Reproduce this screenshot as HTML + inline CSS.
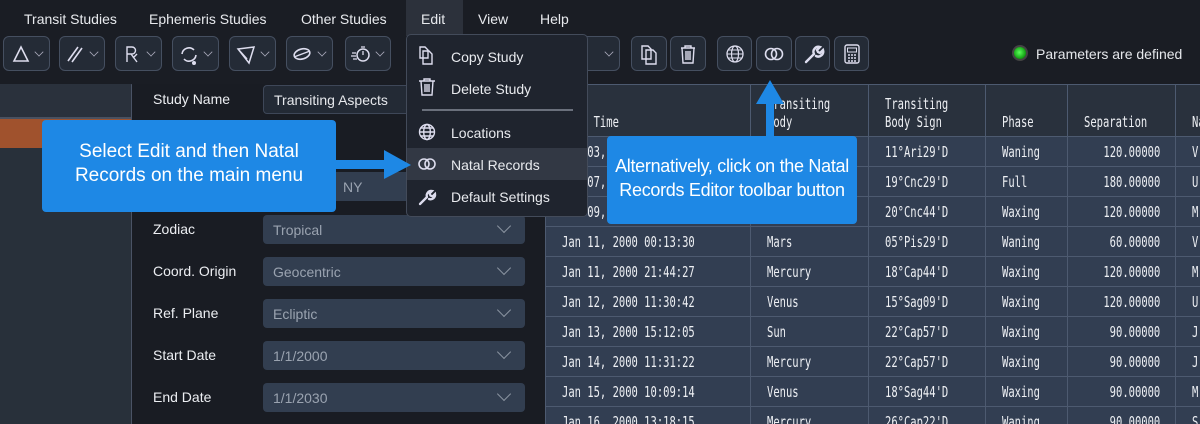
<!DOCTYPE html>
<html><head><meta charset="utf-8"><style>
*{margin:0;padding:0;box-sizing:border-box}
html,body{width:1200px;height:424px;overflow:hidden}
body{background:#1a1d24;font-family:"Liberation Sans","DejaVu Sans",sans-serif;color:#e6e8ec;position:relative}
.a{position:absolute}
.menu span{position:absolute;top:11px;font-size:14px;color:#e8eaee}
.tb{position:absolute;top:36px;height:35px;border:1px solid #454f60;border-radius:6px;background:#242b36}
.tb svg{position:absolute}
.car{position:absolute;right:6px;top:11px;width:8px;height:8px;border-right:1.2px solid #aab;border-bottom:1.2px solid #aab;transform:rotate(45deg) scale(.8)}
.lbl{position:absolute;left:153px;font-size:14px;color:#eceef2}
.inp{position:absolute;left:263px;width:262px;height:29px;background:#323e50;border-radius:4px;font-size:14px;color:#9aa3b0;padding:7px 10px}
.inp .chev{position:absolute;right:16px;top:6px;width:10px;height:10px;border-right:1.3px solid #8a93a0;border-bottom:1.3px solid #8a93a0;transform:rotate(45deg)}
.tw{position:absolute;left:545px;top:84px;width:655px;height:340px;overflow:hidden}
table{border-collapse:collapse;table-layout:fixed;width:700px;font-family:"DejaVu Sans Mono","Liberation Mono",monospace;color:#eef0f4}
td,th{border:1px solid #4d5a70;height:30px;padding:0 0 0 16px;white-space:nowrap;font-weight:normal;overflow:hidden;font-size:15px}
td span,th span{display:inline-block;transform:scaleX(.7);transform-origin:left center}
td.r span{transform-origin:right center}
th{background:#29313d;text-align:left;vertical-align:bottom;padding-bottom:5px;height:52px;line-height:18px}
td{background:#323e52}
td.r{text-align:right;padding:0 15px 0 0}
.mi{position:absolute;left:451px;font-size:14px;color:#e8eaee}
.call{position:absolute;background:#1e88e5;border-radius:4px;color:#fff;font-size:19px;text-align:center;line-height:24px;white-space:nowrap}
</style></head><body>
<div class="menu">
<div class="a" style="left:406px;top:0;width:57px;height:36px;background:#2c313b"></div>
<span style="left:24px">Transit Studies</span>
<span style="left:149px">Ephemeris Studies</span>
<span style="left:301px">Other Studies</span>
<span style="left:421px">Edit</span>
<span style="left:478px">View</span>
<span style="left:540px">Help</span>
</div>
<div class="tb" style="left:3px;width:47px"><svg width="30" height="33"><path d="M10 24 L17 10 L24 24 Z" fill="none" stroke="#dde" stroke-width="1.6"/></svg><div class="car"></div></div>
<div class="tb" style="left:59px;width:46px"><svg width="30" height="33"><path d="M8 24 L18 10 M12 25 L22 11" stroke="#dde" stroke-width="1.6"/></svg><div class="car"></div></div>
<div class="tb" style="left:115px;width:47px"><svg width="30" height="33"><path d="M11 25 V10 H16 a3.5 3.5 0 0 1 0 7 H11 M15 17 L21 25 M17 21 L21 17" fill="none" stroke="#dde" stroke-width="1.4"/></svg><div class="car"></div></div>
<div class="tb" style="left:172px;width:47px"><svg width="30" height="33"><path d="M9 17 a7 7 0 0 1 12 -4 M23 18 a7 7 0 0 1 -12 4" fill="none" stroke="#dde" stroke-width="1.6"/><circle cx="21" cy="26" r="2" fill="#dde"/></svg><div class="car"></div></div>
<div class="tb" style="left:229px;width:47px"><svg width="30" height="33"><path d="M8 12 L24 10 L19 26 Z M8 12 L17 22" fill="none" stroke="#dde" stroke-width="1.5"/></svg><div class="car"></div></div>
<div class="tb" style="left:286px;width:47px"><svg width="30" height="33"><ellipse cx="15" cy="17" rx="8" ry="5" fill="none" stroke="#dde" stroke-width="1.6" transform="rotate(-15 15 17)"/><path d="M7 20 L23 14" stroke="#dde" stroke-width="1.4"/></svg><div class="car"></div></div>
<div class="tb" style="left:345px;width:46px"><svg width="30" height="33"><circle cx="17" cy="18" r="6" fill="none" stroke="#dde" stroke-width="1.5"/><path d="M15 10 H19 M17 18 V14 M6 16 H10 M5 19 H10 M7 22 H11" stroke="#dde" stroke-width="1.3"/></svg><div class="car"></div></div>
<div class="tb" style="left:573px;width:47px"><div class="car"></div></div>
<div class="tb" style="left:631px;width:36px"><svg width="34" height="33"><path d="M10 9 H16 L19 12 V22 H10 Z M14 13 H21 L24 16 V27 H14 Z" fill="#242b36" stroke="#dde" stroke-width="1.4"/></svg></div>
<div class="tb" style="left:670px;width:36px"><svg width="34" height="33"><path d="M10 11 H24 M14 11 V9 H20 V11 M11 11 L12 26 H22 L23 11 M15 14 V23 M17 14 V23 M19 14 V23" fill="none" stroke="#dde" stroke-width="1.4"/></svg></div>
<div class="tb" style="left:717px;width:35px"><svg width="34" height="33"><circle cx="17" cy="17" r="8" fill="none" stroke="#dde" stroke-width="1.3"/><ellipse cx="17" cy="17" rx="3.5" ry="8" fill="none" stroke="#dde" stroke-width="1.2"/><path d="M9 17 H25 M10 13 H24 M10 21 H24" stroke="#dde" stroke-width="1.1"/></svg></div>
<div class="tb" style="left:756px;width:36px"><svg width="34" height="33"><circle cx="14" cy="17" r="5.5" fill="none" stroke="#dde" stroke-width="1.6"/><circle cx="20" cy="17" r="5.5" fill="none" stroke="#dde" stroke-width="1.6"/></svg></div>
<div class="tb" style="left:795px;width:35px"><svg width="34" height="33"><path d="M10 25 L18 17 M18 17 a5 5 0 0 1 6 -7 l-3 3 l1 2 l2 1 l3 -3 a5 5 0 0 1 -7 6" fill="none" stroke="#dde" stroke-width="2.4" stroke-linecap="round"/></svg></div>
<div class="tb" style="left:834px;width:35px"><svg width="34" height="33"><rect x="10" y="8" width="14" height="18" rx="2" fill="none" stroke="#dde" stroke-width="1.4"/><rect x="12.5" y="11" width="9" height="4" fill="none" stroke="#dde"/><path d="M13 18 H21 M13 21 H21 M13 24 H21" stroke="#dde" stroke-width="1.5" stroke-dasharray="2 1"/></svg></div>
<div class="a" style="left:1012px;top:45px;width:16px;height:16px;border-radius:50%;background:radial-gradient(circle at 45% 45%,#5cff5c,#18a818 60%,#0b4a0b);border:2px solid #444"></div>
<div class="a" style="left:1036px;top:46px;font-size:14px">Parameters are defined</div>
<div class="a" style="left:0;top:84px;width:132px;height:340px;background:#28303a;border-top:1px solid #3e4656;border-right:1px solid #4a5365"></div>
<div class="a" style="left:0;top:84px;width:131px;height:34px;background:#2a313c"></div>
<div class="a" style="left:0;top:117px;width:131px;height:2px;background:#4a5160"></div>
<div class="a" style="left:0;top:119px;width:131px;height:29px;background:#a0522d"></div>
<div class="a" style="left:132px;top:84px;width:413px;height:340px;background:#191c23"></div>
<div class="lbl" style="top:91px">Study Name</div>
<div class="a" style="left:263px;top:85px;width:200px;height:29px;background:#232a35;border:1px solid #3e4758;border-radius:4px;font-size:14px;padding:6px 10px">Transiting Aspects</div>
<div class="inp" style="top:172px"><span style="position:absolute;left:80px">NY</span><i class="chev"></i></div>
<div class="lbl" style="top:221px">Zodiac</div><div class="inp" style="top:215px">Tropical<i class="chev"></i></div>
<div class="lbl" style="top:263px">Coord. Origin</div><div class="inp" style="top:257px">Geocentric<i class="chev"></i></div>
<div class="lbl" style="top:305px">Ref. Plane</div><div class="inp" style="top:299px">Ecliptic<i class="chev"></i></div>
<div class="lbl" style="top:347px">Start Date</div><div class="inp" style="top:341px">1/1/2000<i class="chev"></i></div>
<div class="lbl" style="top:389px">End Date</div><div class="inp" style="top:383px">1/1/2030<i class="chev"></i></div>
<div class="tw"><table>
<colgroup><col style="width:205px"><col style="width:118px"><col style="width:117px"><col style="width:82px"><col style="width:108px"><col style="width:70px"></colgroup>
<tr><th><span>Date Time</span></th><th><span>Transiting<br>Body</span></th><th><span>Transiting<br>Body Sign</span></th><th><span>Phase</span></th><th><span>Separation</span></th><th><span>Na</span></th></tr>
<tr><td><span>Jan 03, 2000 03:11:29</span></td><td><span>Moon</span></td><td><span>11°Ari29'D</span></td><td><span>Waning</span></td><td class="r"><span>120.00000</span></td><td><span>V</span></td></tr>
<tr><td><span>Jan 07, 2000 07:20:09</span></td><td><span>Moon</span></td><td><span>19°Cnc29'D</span></td><td><span>Full</span></td><td class="r"><span>180.00000</span></td><td><span>U</span></td></tr>
<tr><td><span>Jan 09, 2000 09:40:44</span></td><td><span>Moon</span></td><td><span>20°Cnc44'D</span></td><td><span>Waxing</span></td><td class="r"><span>120.00000</span></td><td><span>M</span></td></tr>
<tr><td><span>Jan 11, 2000 00:13:30</span></td><td><span>Mars</span></td><td><span>05°Pis29'D</span></td><td><span>Waning</span></td><td class="r"><span>60.00000</span></td><td><span>V</span></td></tr>
<tr><td><span>Jan 11, 2000 21:44:27</span></td><td><span>Mercury</span></td><td><span>18°Cap44'D</span></td><td><span>Waxing</span></td><td class="r"><span>120.00000</span></td><td><span>M</span></td></tr>
<tr><td><span>Jan 12, 2000 11:30:42</span></td><td><span>Venus</span></td><td><span>15°Sag09'D</span></td><td><span>Waxing</span></td><td class="r"><span>120.00000</span></td><td><span>U</span></td></tr>
<tr><td><span>Jan 13, 2000 15:12:05</span></td><td><span>Sun</span></td><td><span>22°Cap57'D</span></td><td><span>Waxing</span></td><td class="r"><span>90.00000</span></td><td><span>J</span></td></tr>
<tr><td><span>Jan 14, 2000 11:31:22</span></td><td><span>Mercury</span></td><td><span>22°Cap57'D</span></td><td><span>Waxing</span></td><td class="r"><span>90.00000</span></td><td><span>J</span></td></tr>
<tr><td><span>Jan 15, 2000 10:09:14</span></td><td><span>Venus</span></td><td><span>18°Sag44'D</span></td><td><span>Waxing</span></td><td class="r"><span>90.00000</span></td><td><span>M</span></td></tr>
<tr><td><span>Jan 16, 2000 13:18:15</span></td><td><span>Mercury</span></td><td><span>26°Cap22'D</span></td><td><span>Waning</span></td><td class="r"><span>90.00000</span></td><td><span>S</span></td></tr>
</table></div>
<div class="a" style="left:406px;top:34px;width:182px;height:183px;background:#1f242e;border:1px solid #434b5a;border-radius:5px"></div>
<div class="a" style="left:422px;top:109px;width:151px;height:2px;background:#6a707c"></div>
<div class="a" style="left:407px;top:148px;width:180px;height:32px;background:#323844"></div>
<svg class="a" style="left:416px;top:44px" width="26" height="168">
<g fill="none" stroke="#dde" stroke-width="1.4">
<path d="M4 3 H9 L12 6 V14 H4 Z M7 7 H13 L16 10 V20 H7 Z"/>
<path d="M3 37 H19 M8 37 V35 H14 V37 M5 37 L6 51 H16 L17 37 M9 40 V48 M11 40 V48 M13 40 V48"/>
<circle cx="11" cy="88" r="7.5"/><ellipse cx="11" cy="88" rx="3.3" ry="7.5"/><path d="M3.5 88 H18.5 M4.5 84 H17.5 M4.5 92 H17.5"/>
<circle cx="8" cy="120" r="5" stroke-width="1.6"/><circle cx="14" cy="120" r="5" stroke-width="1.6"/>
<path d="M4 160 L11 153 M11 153 a4.5 4.5 0 0 1 5 -6 l-2.5 2.5 l1 2 l2 1 l2.5 -2.5 a4.5 4.5 0 0 1 -6 5" stroke-width="2.3" stroke-linecap="round"/>
</g></svg>
<div class="mi" style="top:49px">Copy Study</div>
<div class="mi" style="top:81px">Delete Study</div>
<div class="mi" style="top:125px">Locations</div>
<div class="mi" style="top:157px">Natal Records</div>
<div class="mi" style="top:189px">Default Settings</div>
<div class="call" style="left:42px;top:120px;width:294px;height:92px;padding-top:20px">Select Edit and then Natal<br>Records on the main menu</div>
<div class="a" style="left:336px;top:160px;width:50px;height:9px;background:#1e88e5"></div>
<svg class="a" style="left:384px;top:150px" width="30" height="30"><path d="M0 0 L27 15 L0 29 Z" fill="#1e88e5"/></svg>
<div class="call" style="left:607px;top:136px;width:250px;height:88px;padding-top:18px;font-size:18px;letter-spacing:-0.3px">Alternatively, click on the Natal<br>Records Editor toolbar button</div>
<div class="a" style="left:766px;top:100px;width:8px;height:37px;background:#1e88e5"></div>
<svg class="a" style="left:755px;top:80px" width="30" height="26"><path d="M15 0 L29 24 L1 24 Z" fill="#1e88e5"/></svg>
</body></html>
